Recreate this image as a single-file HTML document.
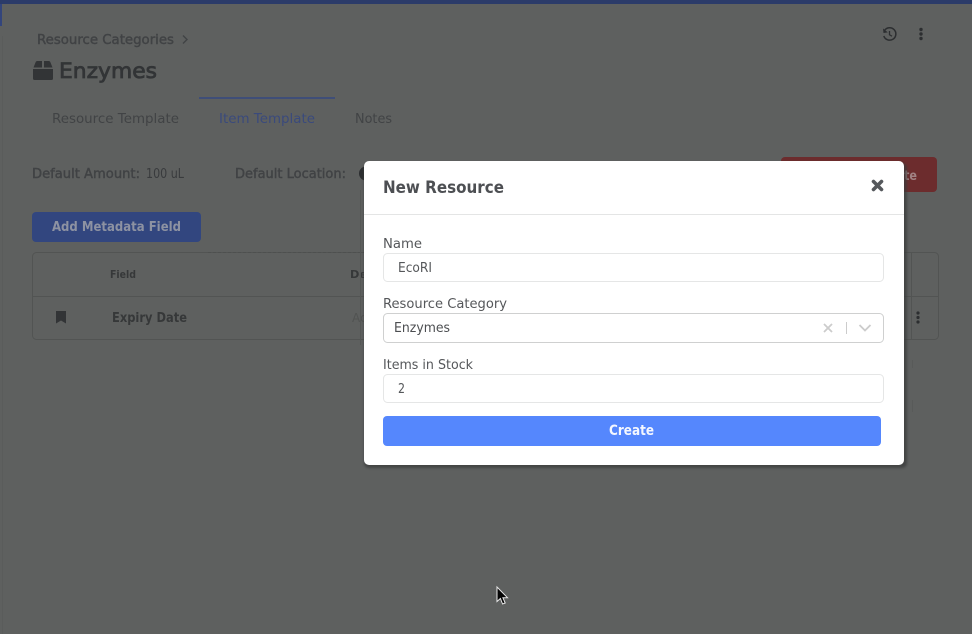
<!DOCTYPE html>
<html lang="en">
<head>
<meta charset="utf-8">
<title>New Resource</title>
<style>
html,body{margin:0;padding:0;width:972px;height:634px;overflow:hidden;background:#5e605f}
svg{display:block;position:absolute;left:0;top:0}
text{font-family:"DejaVu Sans","Liberation Sans",sans-serif}
.m{stroke-width:.45px}
.s{font-weight:700}
</style>
</head>
<body>
<svg width="972" height="634" viewBox="0 0 972 634" xmlns="http://www.w3.org/2000/svg">
<defs>
<filter id="blur" x="-5%" y="-5%" width="110%" height="110%" color-interpolation-filters="sRGB"><feGaussianBlur stdDeviation="0.35"/></filter>
<filter id="sh" x="-5%" y="-5%" width="110%" height="110%" color-interpolation-filters="sRGB"><feGaussianBlur stdDeviation="1.2"/></filter>
</defs>
<rect width="972" height="634" fill="#5e605f"/>
<rect x="0" y="0" width="972" height="4" fill="#2b3b69"/>
<rect x="0" y="4" width="2" height="22" fill="#33457c"/>
<rect x="2" y="36" width="1" height="598" fill="#5a5c5b"/>

<g filter="url(#blur)">
<text class="m" x="37" y="44" font-size="13" fill="#414345" stroke="#414345" textLength="137" lengthAdjust="spacingAndGlyphs">Resource Categories</text>
<path d="M183 35.500l4 4-4 4" fill="none" stroke="#414345" stroke-width="1.400"/>
<path d="M33.500 67.500l2-5a2 2 0 0 1 2-1.500h4.500v6.500zM44 61h4.500a2 2 0 0 1 2 1.500l2 5H44zM33 69h20v9.500a1.500 1.500 0 0 1-1.500 1.500h-17a1.500 1.500 0 0 1-1.500-1.500z" fill="#323436"/>
<text class="m" x="59" y="78" font-size="21.500" fill="#323436" stroke="#323436" style="stroke-width:.8px" textLength="98" lengthAdjust="spacingAndGlyphs">Enzymes</text>
<rect x="199" y="97" width="136" height="2" fill="#3f4e78"/>
<text x="52" y="123" font-size="13.500" fill="#414345" textLength="127" lengthAdjust="spacingAndGlyphs">Resource Template</text>
<text x="219" y="123" font-size="13.500" fill="#3a4a7c" textLength="96" lengthAdjust="spacingAndGlyphs">Item Template</text>
<text x="355" y="123" font-size="13.500" fill="#414345" textLength="37" lengthAdjust="spacingAndGlyphs">Notes</text>
<text class="m" x="32" y="178" font-size="13" fill="#414345" stroke="#414345" textLength="108" lengthAdjust="spacingAndGlyphs">Default Amount:</text>
<text x="146" y="178" font-size="13" fill="#393b3d" textLength="38" lengthAdjust="spacingAndGlyphs">100 uL</text>
<text class="m" x="235" y="178" font-size="13" fill="#414345" stroke="#414345" textLength="111" lengthAdjust="spacingAndGlyphs">Default Location:</text>
<circle cx="366" cy="173.500" r="7" fill="#2c2e30"/>

<rect x="32" y="212" width="169" height="30" rx="4" fill="#32467f"/>
<text class="s" x="52" y="231" font-size="13" fill="#8d92a2" textLength="129" lengthAdjust="spacingAndGlyphs">Add Metadata Field</text>

<rect x="32.500" y="252.500" width="906" height="87" rx="4" fill="none" stroke="#525453"/>
<line x1="32" y1="296.500" x2="939" y2="296.500" stroke="#525453"/>
<line x1="208" y1="252.500" x2="364" y2="252.500" stroke="#4e504f" stroke-dasharray="3 2"/>
<line x1="911.500" y1="253" x2="911.500" y2="339" stroke="#525453"/>
<text class="s" x="110" y="278" font-size="11" fill="#363839" textLength="26" lengthAdjust="spacingAndGlyphs">Field</text>
<text class="s" x="350" y="278" font-size="11" fill="#363839" textLength="17" lengthAdjust="spacingAndGlyphs">De</text>
<path d="M56 311h10v12.500l-5-3-5 3z" fill="#323436"/>
<text class="s" x="112" y="322" font-size="13.500" fill="#363839" textLength="75" lengthAdjust="spacingAndGlyphs">Expiry Date</text>
<text x="352" y="322" font-size="12" fill="#515352">Ac</text>
<circle cx="918" cy="313" r="1.600" fill="#2c2e30"/><circle cx="918" cy="317.500" r="1.600" fill="#2c2e30"/><circle cx="918" cy="322" r="1.600" fill="#2c2e30"/>

<line x1="360.500" y1="190" x2="360.500" y2="345" stroke="#555756"/>
<line x1="912.500" y1="360" x2="912.500" y2="368" stroke="#585a59"/>
<line x1="912.500" y1="400" x2="912.500" y2="412" stroke="#585a59"/>

<rect x="781" y="157" width="156" height="35" rx="4" fill="#6c2c2d"/>
<text class="s" x="904" y="180" font-size="13" fill="#a08283" textLength="13" lengthAdjust="spacingAndGlyphs">te</text>

<path d="M884.500 30.500a6.200 6.200 0 1 1-.7 5.500" fill="none" stroke="#2c2e30" stroke-width="1.500"/>
<path d="M883 28.500l.5 4.500 4.300-.6z" fill="#2c2e30"/>
<path d="M889.500 31v3.800l2.500 1.400" fill="none" stroke="#2c2e30" stroke-width="1.300"/>
<circle cx="921" cy="29.500" r="1.700" fill="#2c2e30"/><circle cx="921" cy="34" r="1.700" fill="#2c2e30"/><circle cx="921" cy="38.500" r="1.700" fill="#2c2e30"/>
</g>

<rect x="364" y="163" width="543" height="305" rx="5" fill="#3a3b3b" opacity=".75" filter="url(#sh)"/>
<rect x="364" y="161" width="540" height="304" rx="5" fill="#ffffff"/>
<line x1="364" y1="214.500" x2="904" y2="214.500" stroke="#e4e5e5"/>

<g filter="url(#blur)">
<text class="s" x="383" y="193" font-size="16.500" fill="#4d4f53" textLength="121" lengthAdjust="spacingAndGlyphs">New Resource</text>
<path d="M873.500 181.500l8 8M881.500 181.500l-8 8" stroke="#55585c" stroke-width="3.600" stroke-linecap="round"/>

<text x="383" y="248" font-size="13.500" fill="#55575a" textLength="39" lengthAdjust="spacingAndGlyphs">Name</text>
<rect x="383.500" y="253.500" width="500" height="28" rx="4" fill="#fff" stroke="#e5e6e6"/>
<text x="398" y="272" font-size="13.500" fill="#55575a" textLength="34" lengthAdjust="spacingAndGlyphs">EcoRI</text>

<text x="383" y="308" font-size="13.500" fill="#55575a" textLength="124" lengthAdjust="spacingAndGlyphs">Resource Category</text>
<rect x="383.500" y="313.500" width="500" height="29" rx="4" fill="#fff" stroke="#cfd0d0"/>
<text x="394" y="332" font-size="13.500" fill="#4c4e51" textLength="56" lengthAdjust="spacingAndGlyphs">Enzymes</text>
<path d="M824 324l8 8M832 324l-8 8" stroke="#cccccc" stroke-width="1.800"/>
<line x1="846.500" y1="322" x2="846.500" y2="334" stroke="#cccccc"/>
<path d="M859.500 325l5.500 5.500 5.500-5.500" fill="none" stroke="#cccccc" stroke-width="1.800"/>

<text x="383" y="369" font-size="13.500" fill="#55575a" textLength="90" lengthAdjust="spacingAndGlyphs">Items in Stock</text>
<rect x="383.500" y="374.500" width="500" height="28" rx="4" fill="#fff" stroke="#e5e6e6"/>
<text x="398" y="393" font-size="13.500" fill="#55575a" textLength="7" lengthAdjust="spacingAndGlyphs">2</text>

<rect x="383" y="416" width="498" height="30" rx="4" fill="#5587fd"/>
<text class="s" x="609" y="435" font-size="14" fill="#f4f7ff" textLength="45" lengthAdjust="spacingAndGlyphs">Create</text>
</g>

<path d="M497 587v14.500l3.400-3 2.200 5.500 2.600-1-2.300-5.300h4.600z" fill="#050505" stroke="#e8e8e8" stroke-width="1"/>
</svg>
</body>
</html>
